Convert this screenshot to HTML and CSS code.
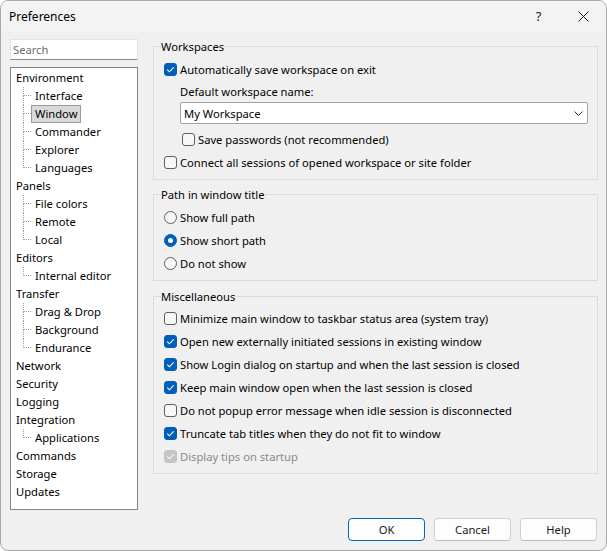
FILE: index.html
```html
<!DOCTYPE html>
<html>
<head>
<meta charset="utf-8">
<title>Preferences</title>
<link rel="stylesheet" href="styles.css">
</head>
<body>
<div class="window">
  <div class="titlebar">
    <span class="title">Preferences</span>
    <div class="tb-btns">
      <span class="tb-btn help">?</span>
      <span class="tb-btn"><svg width="11" height="11" viewBox="0 0 11 11"><path d="M0.5 0.5 L10.5 10.5 M10.5 0.5 L0.5 10.5" stroke="#1a1a1a" stroke-width="1" fill="none"/></svg></span>
    </div>
  </div>
  <div class="content">
    <div class="main">
      <div class="left">
        <div class="search">Search</div>
        <div class="tree">
          <div class="node">Environment</div>
          <div class="child"><span class="conn"><span class="a"></span><span class="b"></span></span><span class="lbl">Interface</span></div>
          <div class="child sel"><span class="conn"><span class="a"></span><span class="b"></span></span><span class="lbl">Window</span></div>
          <div class="child"><span class="conn"><span class="a"></span><span class="b"></span></span><span class="lbl">Commander</span></div>
          <div class="child"><span class="conn"><span class="a"></span><span class="b"></span></span><span class="lbl">Explorer</span></div>
          <div class="child last"><span class="conn"><span class="a"></span><span class="b"></span></span><span class="lbl">Languages</span></div>
          <div class="node">Panels</div>
          <div class="child"><span class="conn"><span class="a"></span><span class="b"></span></span><span class="lbl">File colors</span></div>
          <div class="child"><span class="conn"><span class="a"></span><span class="b"></span></span><span class="lbl">Remote</span></div>
          <div class="child last"><span class="conn"><span class="a"></span><span class="b"></span></span><span class="lbl">Local</span></div>
          <div class="node">Editors</div>
          <div class="child last"><span class="conn"><span class="a"></span><span class="b"></span></span><span class="lbl">Internal editor</span></div>
          <div class="node">Transfer</div>
          <div class="child"><span class="conn"><span class="a"></span><span class="b"></span></span><span class="lbl">Drag &amp; Drop</span></div>
          <div class="child"><span class="conn"><span class="a"></span><span class="b"></span></span><span class="lbl">Background</span></div>
          <div class="child last"><span class="conn"><span class="a"></span><span class="b"></span></span><span class="lbl">Endurance</span></div>
          <div class="node">Network</div>
          <div class="node">Security</div>
          <div class="node">Logging</div>
          <div class="node">Integration</div>
          <div class="child last"><span class="conn"><span class="a"></span><span class="b"></span></span><span class="lbl">Applications</span></div>
          <div class="node">Commands</div>
          <div class="node">Storage</div>
          <div class="node">Updates</div>
        </div>
      </div>
      <div class="right">
        <fieldset class="group ws">
          <legend>Workspaces</legend>
          <div class="opt"><span class="cb on"><svg viewBox="0 0 13 13"><path d="M3.3 6.7 L5.4 8.8 L9.7 4.4"/></svg></span>Automatically save workspace on exit</div>
          <div class="field-label indent">Default workspace name:</div>
          <div class="combo indent"><span>My Workspace</span><svg width="9" height="5" viewBox="0 0 9 5"><path d="M0.5 0.5 L4.5 4.5 L8.5 0.5" stroke="#333" stroke-width="1" fill="none"/></svg></div>
          <div class="opt sub"><span class="cb"></span>Save passwords (not recommended)</div>
          <div class="opt"><span class="cb"></span>Connect all sessions of opened workspace or site folder</div>
        </fieldset>
        <fieldset class="group path">
          <legend>Path in window title</legend>
          <div class="opt"><span class="rb"></span>Show full path</div>
          <div class="opt"><span class="rb on"></span>Show short path</div>
          <div class="opt"><span class="rb"></span>Do not show</div>
        </fieldset>
        <fieldset class="group misc">
          <legend>Miscellaneous</legend>
          <div class="opt"><span class="cb"></span>Minimize main window to taskbar status area (system tray)</div>
          <div class="opt"><span class="cb on"><svg viewBox="0 0 13 13"><path d="M3.3 6.7 L5.4 8.8 L9.7 4.4"/></svg></span>Open new externally initiated sessions in existing window</div>
          <div class="opt"><span class="cb on"><svg viewBox="0 0 13 13"><path d="M3.3 6.7 L5.4 8.8 L9.7 4.4"/></svg></span>Show Login dialog on startup and when the last session is closed</div>
          <div class="opt"><span class="cb on"><svg viewBox="0 0 13 13"><path d="M3.3 6.7 L5.4 8.8 L9.7 4.4"/></svg></span>Keep main window open when the last session is closed</div>
          <div class="opt"><span class="cb"></span>Do not popup error message when idle session is disconnected</div>
          <div class="opt"><span class="cb on"><svg viewBox="0 0 13 13"><path d="M3.3 6.7 L5.4 8.8 L9.7 4.4"/></svg></span>Truncate tab titles when they do not fit to window</div>
          <div class="opt disabled"><span class="cb dis"><svg viewBox="0 0 13 13"><path d="M3.3 6.7 L5.4 8.8 L9.7 4.4"/></svg></span>Display tips on startup</div>
        </fieldset>
      </div>
    </div>
    <div class="buttons">
      <div class="btn default">OK</div>
      <div class="btn">Cancel</div>
      <div class="btn">Help</div>
    </div>
  </div>
</div>
</body>
</html>
```
FILE: styles.css
```css
html, body {
  margin: 0;
  background: #ffffff;
}
body {
  font-family: "Noto Sans", "Open Sans", sans-serif;
  font-size: 11.2px;
  line-height: 15px;
  color: #000;
}
.window {
  width: 607px;
  height: 551px;
  box-sizing: border-box;
  border: 1px solid #a9a9a9;
  border-radius: 8px;
  background: #f0f0f0;
  display: flex;
  flex-direction: column;
  overflow: hidden;
}
.titlebar {
  height: 30px;
  flex: none;
  display: flex;
  align-items: center;
  justify-content: space-between;
  background: #f3f3f3;
}
.title {
  padding-left: 8px;
  font-size: 12px;
}
.tb-btns {
  display: flex;
  height: 30px;
}
.tb-btn {
  width: 46px;
  display: flex;
  align-items: center;
  justify-content: center;
  color: #1a1a1a;
}
.tb-btn.help {
  font-size: 13px;
  padding-left: 3px;
  box-sizing: border-box;
}
.content {
  flex: 1;
  display: flex;
  flex-direction: column;
  padding: 8px 8px 9px 9px;
}
.main {
  display: flex;
  gap: 15px;
}
.left {
  width: 128px;
  flex: none;
  display: flex;
  flex-direction: column;
}
.search {
  height: 21px;
  box-sizing: border-box;
  background: #fff;
  border: 1px solid #e3e3e3;
  border-bottom-color: #8a8a8a;
  color: #6d6d6d;
  padding: 0 2px;
  line-height: 19px;
  margin-bottom: 7px;
}
.tree {
  height: 443px;
  box-sizing: border-box;
  background: #fff;
  border: 1px solid #858585;
  padding: 1px 0 0 5px;
}
.node {
  height: 18px;
  line-height: 18px;
}
.child {
  display: flex;
  height: 18px;
  margin-left: 7px;
}
.conn {
  width: 8px;
  flex: none;
  display: flex;
  flex-direction: column;
}
.conn .a {
  height: 9px;
  box-sizing: border-box;
  border-left: 1px dotted #a0a0a0;
  border-bottom: 1px dotted #a0a0a0;
}
.conn .b {
  flex: 1;
  border-left: 1px dotted #a0a0a0;
}
.child.last .conn .b {
  border-left: none;
}
.lbl {
  padding: 0 3px;
  border: 1px solid transparent;
  height: 16px;
  line-height: 16px;
}
.child.sel .lbl {
  background: #d9d9d9;
  border-color: #9b9b9b;
}
.right {
  flex: 1;
  display: flex;
  flex-direction: column;
}
.group {
  margin: 0;
  border: 1px solid #dcdcdc;
  padding: 4px 8px 5px 10px;
  min-width: 0;
}
.group legend {
  padding: 0;
  margin-left: -3px;
  line-height: 15px;
}
.group.path {
  margin-top: 7px;
}
.group.misc {
  margin-top: 8px;
  padding-top: 3px;
  padding-bottom: 5px;
}
.opt {
  display: flex;
  align-items: center;
  height: 23px;
  white-space: nowrap;
}
.opt.sub {
  margin-left: 18px;
  margin-top: 4px;
}
.opt.disabled {
  color: #8a8a8a;
}
.cb {
  width: 13px;
  height: 13px;
  box-sizing: border-box;
  border-radius: 3px;
  border: 1px solid #5f5f5f;
  background: #f7f7f7;
  margin-right: 3px;
  flex: none;
  display: flex;
}
.cb svg {
  width: 13px;
  height: 13px;
  margin: -1px;
}
.cb svg path {
  stroke: #fff;
  stroke-width: 1.1;
  fill: none;
}
.cb.on {
  background: #005fb8;
  border-color: #005fb8;
}
.cb.dis {
  background: #c4c4c4;
  border-color: #c4c4c4;
}
.rb {
  width: 13px;
  height: 13px;
  box-sizing: border-box;
  border-radius: 50%;
  border: 1px solid #5f5f5f;
  background: #f7f7f7;
  margin-right: 3px;
  flex: none;
  display: flex;
  align-items: center;
  justify-content: center;
}
.rb.on {
  background: #005fb8;
  border-color: #005fb8;
}
.rb.on::after {
  content: "";
  width: 5px;
  height: 5px;
  border-radius: 50%;
  background: #fff;
}
.indent {
  margin-left: 16px;
}
.field-label {
  margin-top: 3px;
}
.combo {
  margin-top: 3px;
  width: 408px;
  height: 22px;
  box-sizing: border-box;
  border: 1px solid #a3a3a3;
  border-radius: 2px;
  background: #fff;
  display: flex;
  align-items: center;
  justify-content: space-between;
  padding: 0 4px 0 3px;
}
.buttons {
  margin-top: auto;
  margin-right: 1px;
  display: flex;
  justify-content: flex-end;
  gap: 9px;
}
.btn {
  width: 77px;
  height: 23px;
  box-sizing: border-box;
  border: 1px solid #d0d0d0;
  border-bottom-color: #bdbdbd;
  border-radius: 4px;
  background: #fdfdfd;
  color: #1a1a1a;
  display: flex;
  align-items: center;
  justify-content: center;
}
.btn.default {
  border-color: #0067c0;
}
```
